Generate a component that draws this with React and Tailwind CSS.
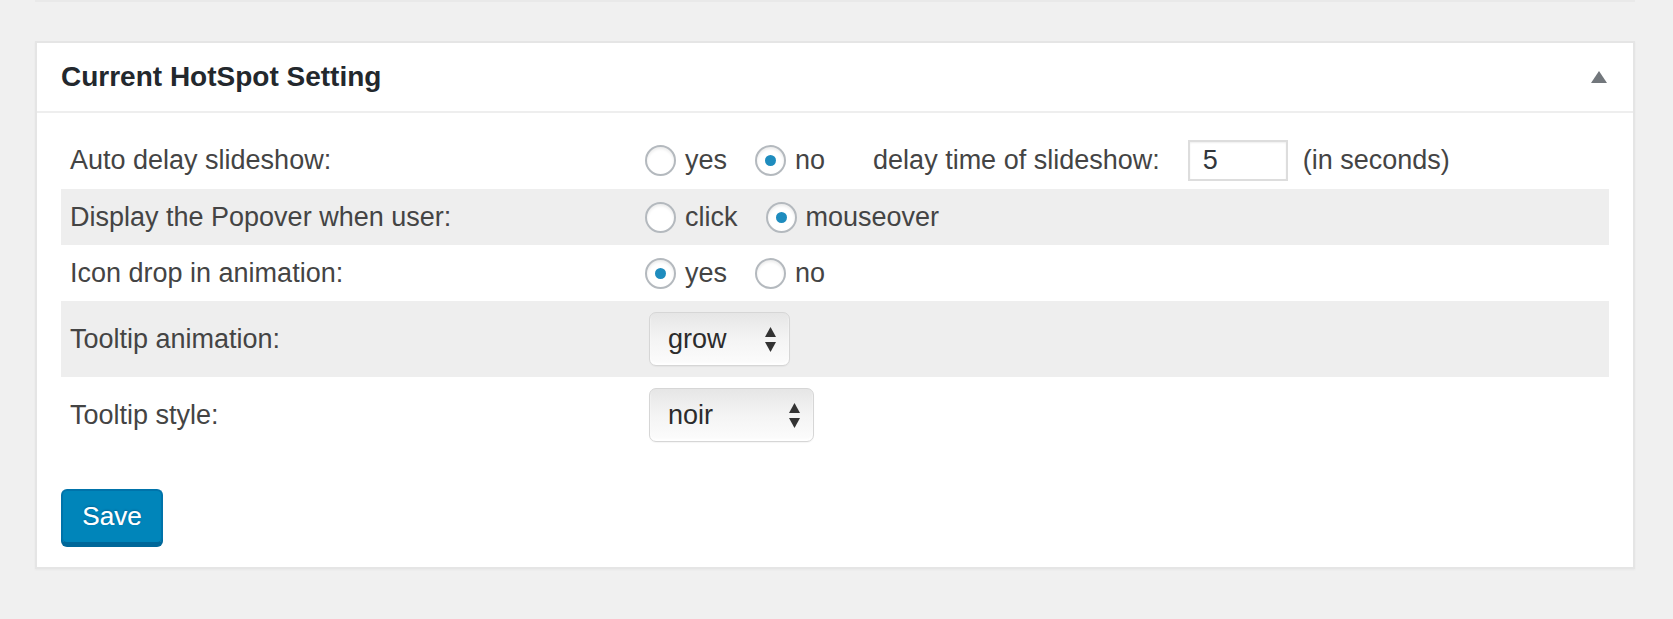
import React from 'react';

const font = { fontFamily: '"Liberation Sans", Arial, sans-serif' };

const Radio = ({ checked, label, spaced }) => (
  <label className={spaced ? 'flex items-center mr-[28px]' : 'flex items-center'}>
    <span className="w-[31px] h-[31px] mr-[9px] rounded-full border-2 border-[#b4b9be] bg-white shadow-[inset_0_2px_3px_rgba(0,0,0,0.08)] flex items-center justify-center">
      {checked && <span className="w-[11px] h-[11px] rounded-full bg-[#1e8cbe]" />}
    </span>
    <span>{label}</span>
  </label>
);

const Select = ({ value, className }) => (
  <div className={`${className} h-[54px] ml-[4px] rounded-[7px] border border-[#d6d6d6] bg-gradient-to-b from-[#e6e6e6] via-[#f4f4f4] to-[#fcfcfc] shadow-[inset_0_-2px_2px_rgba(255,255,255,0.9),0_1px_1px_rgba(0,0,0,0.04)] flex items-center justify-between pl-[18px] pr-[13px] text-[#2c2c2c]`}>
    <span>{value}</span>
    <svg width="11" height="25" viewBox="0 0 11 25">
      <polygon points="0,10 5.5,0 11,10" fill="#333" />
      <polygon points="0,15 11,15 5.5,25" fill="#333" />
    </svg>
  </div>
);

const Row = ({ label, gray, tall, children }) => (
  <div className={`grid grid-cols-[575px_1fr] items-center ${tall ? 'h-[76px]' : 'h-[56px]'} ${gray ? 'bg-[#eeeeee]' : ''}`}>
    <div className="pl-[9px]">{label}</div>
    <div className="pl-[9px] flex items-center">{children}</div>
  </div>
);

export default function App() {
  return (
    <div className="min-h-[619px] bg-[#f0f0f0] pl-[35px] pr-[38px] text-[#444] text-[27px]" style={font}>
      <div className="h-[2px] bg-[#e9e9e9]" />

      <div className="mt-[39px] bg-white border-2 border-[#e5e5e5] shadow-[0_1px_2px_rgba(0,0,0,0.04)]">
        <div className="h-[70px] flex items-center justify-between pl-[24px] pr-[26px] border-b-2 border-[#eeeeee]">
          <h2 className="text-[28px] font-bold text-[#23282d] leading-none">Current HotSpot Setting</h2>
          <svg width="16" height="12" viewBox="0 0 16 12">
            <polygon points="0,12 8,0 16,12" fill="#72777c" />
          </svg>
        </div>

        <div className="px-[24px] pt-[18px] pb-[23px]">
          <div className="grid grid-cols-[575px_1fr] items-center h-[58px]">
            <div className="pl-[9px]">Auto delay slideshow:</div>
            <div className="pl-[9px] flex items-center">
              <Radio label="yes" spaced />
              <Radio label="no" checked />
              <span className="ml-[48px]">delay time of slideshow:</span>
              <input
                readOnly
                value="5"
                className="ml-[28px] w-[100px] h-[41px] border-2 border-[#dddddd] shadow-[inset_0_1px_2px_rgba(0,0,0,0.07)] px-[13px] text-[#32373c] text-[27px] outline-none"
                style={font}
              />
              <span className="ml-[15px]">(in seconds)</span>
            </div>
          </div>
          <Row label="Display the Popover when user:" gray>
            <Radio label="click" spaced />
            <Radio label="mouseover" checked />
          </Row>
          <Row label="Icon drop in animation:">
            <Radio label="yes" checked spaced />
            <Radio label="no" />
          </Row>
          <Row label="Tooltip animation:" gray tall>
            <Select value="grow" className="w-[141px]" />
          </Row>
          <Row label="Tooltip style:" tall>
            <Select value="noir" className="w-[165px]" />
          </Row>

          <button className="mt-[36px] w-[102px] h-[55px] rounded-[6px] bg-[#0085ba] border-2 border-[#0073aa] border-b-[#006799] shadow-[0_3px_0_#006799] text-white text-[26px] [text-shadow:0_-1px_2px_#006799,0_0_0.5px_#ffffff]">
            Save
          </button>
        </div>
      </div>
    </div>
  );
}
